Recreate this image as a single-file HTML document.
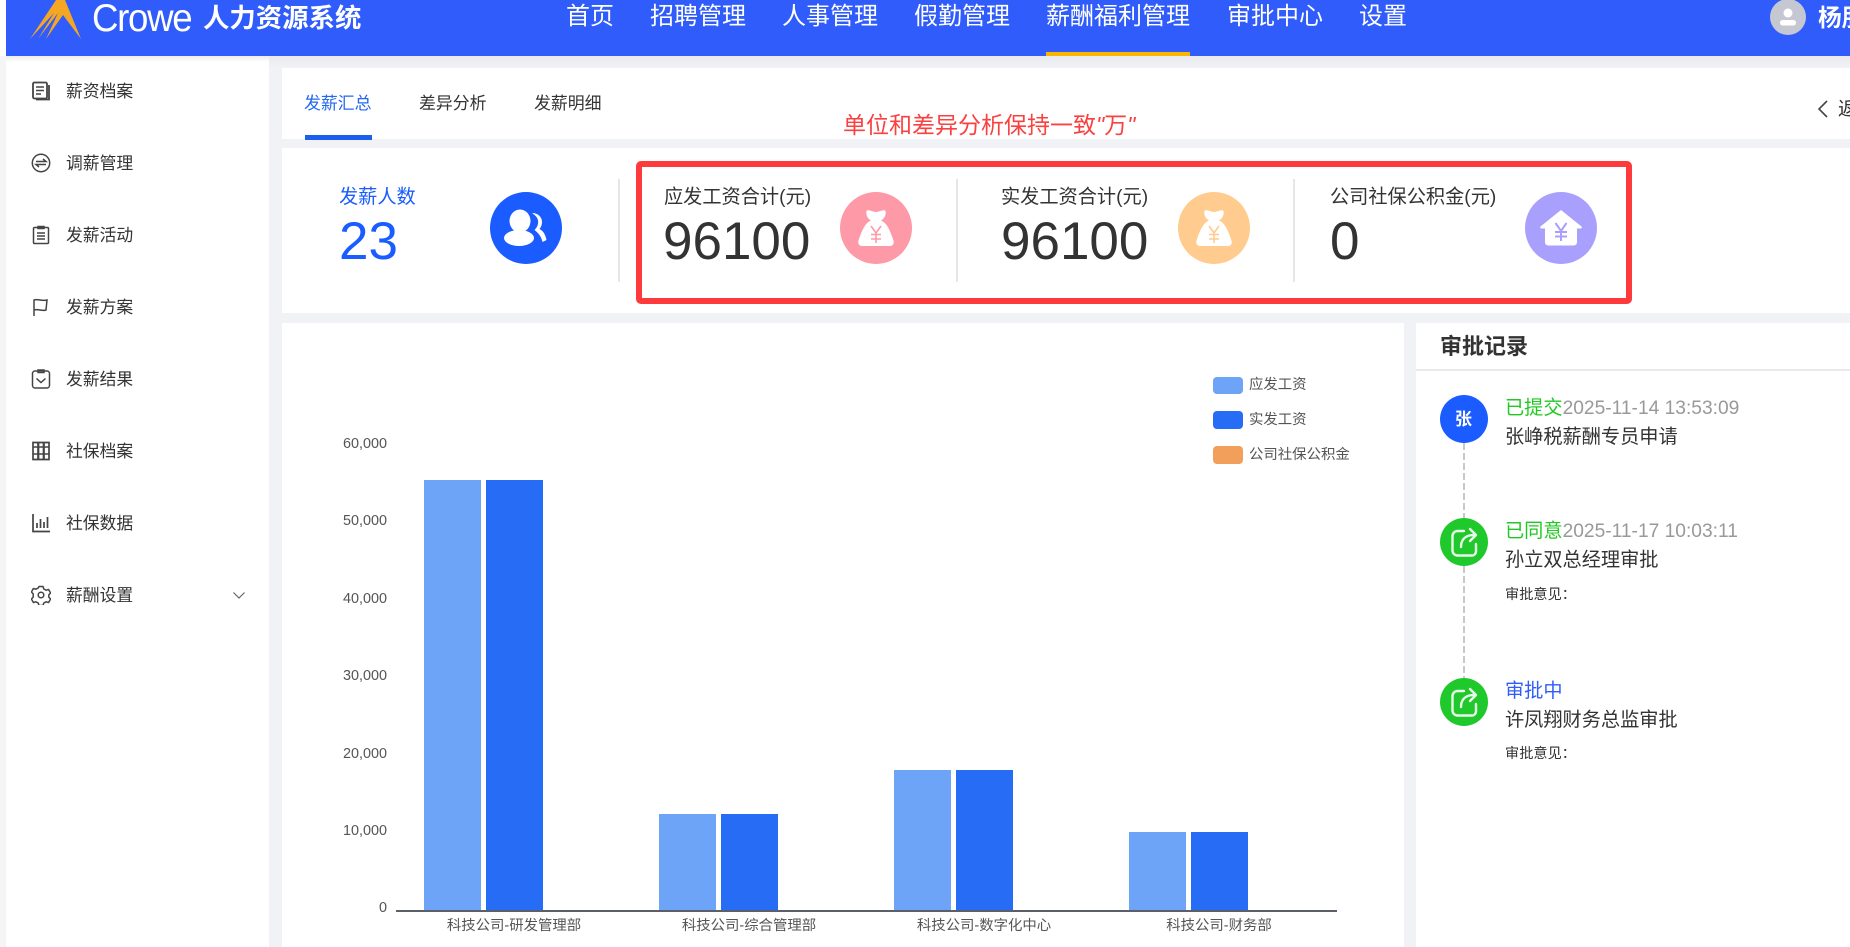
<!DOCTYPE html>
<html lang="zh">
<head>
<meta charset="utf-8">
<title>人力资源系统</title>
<style>
html,body{margin:0;padding:0;width:1850px;height:947px;overflow:hidden;background:#f1f2f5;}
body{position:relative;font-family:"Liberation Sans","Noto Sans CJK SC",sans-serif;color:#333;}
.b{position:absolute;}
.t{position:absolute;white-space:nowrap;}
.nav{font-size:24px;color:#fff;top:2px;line-height:30px;}
.side{font-size:16.8px;color:#333;left:66px;line-height:24px;}
.tab{font-size:16.9px;top:92px;line-height:24px;color:#333;}
.lab{font-size:19.2px;top:185px;line-height:26px;color:#333;}
.num{font-size:53px;top:214px;line-height:56px;color:#333;}
.circ{position:absolute;width:72px;height:72px;top:192px;border-radius:50%;}
.dv{position:absolute;width:2px;top:179px;height:103px;background:#e6e6e6;}
.ic{position:absolute;left:31px;width:20px;height:20px;fill:none;stroke:#444;stroke-width:1.5;}
.ax{font-size:14.4px;color:#555;line-height:18px;}
.yl{right:1463px;}
.xl{top:917px;transform:translateX(-50%);}
.bar{position:absolute;}
.tl{font-size:19.2px;line-height:24px;left:1505px;color:#333;}
.cm{font-size:14.2px;line-height:20px;left:1505px;color:#333;}
.dot{position:absolute;left:1440px;width:48px;height:48px;border-radius:50%;background:#1fc92b;}
.dash{position:absolute;left:1463px;width:2px;background:repeating-linear-gradient(to bottom,#c8c8c8 0 7px,transparent 7px 10px);}
</style>
</head>
<body>
<!-- left strip, sidebar -->
<div class="b" style="left:0;top:0;width:6px;height:56px;background:#fff"></div>
<div class="b" style="left:0;top:56px;width:6px;height:891px;background:#f5f5f5"></div>
<div class="b" style="left:6px;top:56px;width:263px;height:891px;background:#fff"></div>
<div class="b" style="left:269px;top:56px;width:1581px;height:12px;background:linear-gradient(#e9eaed,#f1f2f5)"></div>
<div class="b" style="left:6px;top:56px;width:263px;height:6px;background:linear-gradient(#ececee,#fff)"></div>

<!-- header -->
<div class="b" style="left:6px;top:0;width:1844px;height:56px;background:#2f5cfa"></div>
<svg class="b" style="left:26px;top:0" width="60" height="42" viewBox="26 0 60 42">
  <path fill="#f5a623" d="M56 0H65L81 39L63 15L46 39L58 13L38 39L54 13L30 39Z"/>
</svg>
<div class="t" style="left:92px;top:-3px;font-size:39px;line-height:44px;color:#fff;letter-spacing:-1.4px;transform-origin:left;transform:scaleX(.94)">Crowe</div>
<div class="t" style="left:203px;top:2px;font-size:26.4px;line-height:32px;color:#fff;font-weight:700">人力资源系统</div>
<div class="t nav" style="left:566px">首页</div>
<div class="t nav" style="left:650px">招聘管理</div>
<div class="t nav" style="left:782px">人事管理</div>
<div class="t nav" style="left:914px">假勤管理</div>
<div class="t nav" style="left:1046px">薪酬福利管理</div>
<div class="t nav" style="left:1227px">审批中心</div>
<div class="t nav" style="left:1359px">设置</div>
<div class="b" style="left:1046px;top:52px;width:144px;height:4px;background:#f9b500"></div>
<svg class="b" style="left:1770px;top:0" width="36" height="36" viewBox="0 0 36 36">
  <circle cx="18" cy="17" r="18" fill="#c5c8d2"/>
  <circle cx="18" cy="13" r="4.5" fill="#fff"/>
  <rect x="10" y="20" width="16" height="5.5" rx="2.7" fill="#fff"/>
</svg>
<div class="t" style="left:1818px;top:4px;font-size:23.6px;line-height:30px;color:#fff;font-weight:700">杨朋</div>

<!-- sidebar -->
<svg class="ic" style="top:81px" viewBox="0 0 20 20"><rect x="2" y="1.5" width="14" height="16" rx="1.5" stroke-width="1.8"/><path d="M5 6h8M5 9.5h8M5 13h5"/><path d="M18 4v14.5H5" stroke-width="1.8"/></svg>
<div class="t side" style="top:80px">薪资档案</div>
<svg class="ic" style="top:153px" viewBox="0 0 20 20"><circle cx="10" cy="10" r="8.7"/><path d="M5 8.5h10L12 6M15 11.5H5L8 14"/></svg>
<div class="t side" style="top:152px">调薪管理</div>
<svg class="ic" style="top:225px" viewBox="0 0 20 20"><rect x="2.5" y="2.5" width="15" height="16" rx="1"/><path d="M7 1.500h6v2H7zM6 8h8M6 11h8M6 14h8"/></svg>
<div class="t side" style="top:224px">发薪活动</div>
<svg class="ic" style="top:297px" viewBox="0 0 20 20"><path d="M3 19V3c4-1.500 8 1.500 13 0l-1 10c-4 1.500-8-1.500-12 0"/></svg>
<div class="t side" style="top:296px">发薪方案</div>
<svg class="ic" style="top:369px" viewBox="0 0 20 20"><rect x="1.500" y="2" width="17" height="17" rx="2.500"/><path d="M7 1h6v2.500H7zM5.500 9.500l4.500 4 4.500-4"/></svg>
<div class="t side" style="top:368px">发薪结果</div>
<svg class="ic" style="top:441px" viewBox="0 0 20 20"><path d="M2 1.500h5v17H2zM7.500 1.500h5v17h-5zM13 1.500h5v17h-5z" stroke-width="1.700"/><path d="M2 6h16M2 13h16" stroke-width="1.500"/></svg>
<div class="t side" style="top:440px">社保档案</div>
<svg class="ic" style="top:513px" viewBox="0 0 20 20"><path d="M2 1v17.500h17" stroke-width="1.700"/><path d="M6 15V10M9.500 15V6M13 15V9M16.500 15V4" stroke-width="1.700"/></svg>
<div class="t side" style="top:512px">社保数据</div>
<svg class="ic" style="top:585px" viewBox="0 0 20 20"><path stroke-linejoin="round" d="M8 1.500h4l.8 2.500 2.300 1.200 2.500-.7 2 3.500-1.800 1.900v2.200l1.800 1.900-2 3.500-2.500-.7-2.300 1.200-.8 2.500H8l-.8-2.500-2.300-1.200-2.500.7-2-3.500 1.800-1.900V8.900L.4 7 2.400 3.500l2.500.7 2.300-1.200z"/><circle cx="10" cy="10" r="2.800"/></svg>
<div class="t side" style="top:584px">薪酬设置</div>
<svg class="b" style="left:232px;top:591px" width="14" height="9" viewBox="0 0 14 9"><path d="M1.500 1.500L7 7l5.500-5.500" fill="none" stroke="#666" stroke-width="1.200"/></svg>

<!-- tabs panel -->
<div class="b" style="left:282px;top:68px;width:1568px;height:71px;background:#fff"></div>
<div class="t tab" style="left:304px;color:#2468f2">发薪汇总</div>
<div class="t tab" style="left:419px">差异分析</div>
<div class="t tab" style="left:534px">发薪明细</div>
<div class="b" style="left:305px;top:135px;width:67px;height:5px;background:#1c5fee"></div>
<svg class="b" style="left:1816px;top:99px" width="14" height="20" viewBox="0 0 14 20"><path d="M11 2L3 10l8 8" fill="none" stroke="#444" stroke-width="1.600"/></svg>
<div class="t" style="left:1838px;top:98px;font-size:19px;line-height:24px;color:#333">返回</div>
<div class="t" style="left:843px;top:111px;font-size:23px;line-height:28px;color:#fb4040">单位和差异分析保持一致<span style="font-style:italic">"</span>万<span style="font-style:italic">"</span></div>

<!-- stats panel -->
<div class="b" style="left:282px;top:148px;width:1568px;height:165px;background:#fff"></div>
<div class="t lab" style="left:339px;color:#1a5cff">发薪人数</div>
<div class="t num" style="left:339px;color:#1a5cff">23</div>
<div class="circ" style="left:490px;background:#1a5cff"></div>
<svg class="b" style="left:490px;top:192px" width="72" height="72" viewBox="0 0 72 72">
  <ellipse cx="30" cy="29" rx="10.500" ry="11.500" fill="#fff"/>
  <ellipse cx="29" cy="46" rx="15" ry="8" fill="#fff"/>
  <path fill="#fff" d="M42 21c6 0 10 4 10 9 0 3-1 5-2.500 7 4 2 6 6 7 11l-4 2c-1-5-4-9-8-12 3-3 4-6 3.500-9.500-.3-3-3-5.500-6-7.500z"/>
</svg>
<div class="dv" style="left:618px"></div>

<div class="t lab" style="left:664px">应发工资合计(元)</div>
<div class="t num" style="left:663px">96100</div>
<div class="circ" style="left:840px;background:#fe9aa8"></div>
<svg class="b" style="left:840px;top:192px" width="72" height="72" viewBox="0 0 72 72">
  <path fill="#fff" d="M27 18.500c2-1 6 1.500 9 1.500s7-2.500 9-1.500c1.500 1 .5 6-1.500 8-.8 1-2 1.500-2.500 2 6 2.500 9 10 12.500 20 .8 3-.5 5.500-3.500 5.500H22c-3 0-4.300-2.500-3.500-5.500 3.500-10 6.500-17.500 12.500-20-.5-.5-1.700-1-2.500-2-2-2-3-7-1.500-8z"/>
  <path fill="none" stroke="#fe9aa8" stroke-width="1.600" d="M31 34l5 7 5-7M36 41v10M31 42.500h10M31 47h10"/>
</svg>
<div class="dv" style="left:956px"></div>

<div class="t lab" style="left:1001px">实发工资合计(元)</div>
<div class="t num" style="left:1001px">96100</div>
<div class="circ" style="left:1178px;background:#ffcb8e"></div>
<svg class="b" style="left:1178px;top:192px" width="72" height="72" viewBox="0 0 72 72">
  <path fill="#fff" d="M27 18.500c2-1 6 1.500 9 1.500s7-2.500 9-1.500c1.500 1 .5 6-1.500 8-.8 1-2 1.500-2.500 2 6 2.500 9 10 12.500 20 .8 3-.5 5.500-3.500 5.500H22c-3 0-4.300-2.500-3.500-5.500 3.500-10 6.500-17.500 12.500-20-.5-.5-1.700-1-2.500-2-2-2-3-7-1.500-8z"/>
  <path fill="none" stroke="#ffcb8e" stroke-width="1.600" d="M31 34l5 7 5-7M36 41v10M31 42.500h10M31 47h10"/>
</svg>
<div class="dv" style="left:1293px"></div>

<div class="t lab" style="left:1330px">公司社保公积金(元)</div>
<div class="t num" style="left:1330px">0</div>
<div class="circ" style="left:1525px;background:#a9a0fd"></div>
<svg class="b" style="left:1525px;top:192px" width="72" height="72" viewBox="0 0 72 72">
  <path fill="#fff" d="M36 18L56.500 34.500c.8.8.3 2-1 2H52V50c0 2-1.200 3.500-3.500 3.500h-25C21.200 53.500 20 52 20 50V36.500h-3.500c-1.300 0-1.800-1.200-1-2z"/>
  <path fill="none" stroke="#a9a0fd" stroke-width="2" d="M30.500 31l5.500 8 5.500-8M36 39v10M30 40h12M30 44.500h12"/>
</svg>

<!-- red box -->
<div class="b" style="left:636px;top:161px;width:984px;height:131px;border:6px solid #fe3a3d;border-radius:5px"></div>

<!-- chart panel -->
<div class="b" style="left:282px;top:323px;width:1122px;height:624px;background:#fff"></div>
<div class="t ax yl" style="top:435px">60,000</div>
<div class="t ax yl" style="top:512px">50,000</div>
<div class="t ax yl" style="top:590px">40,000</div>
<div class="t ax yl" style="top:667px">30,000</div>
<div class="t ax yl" style="top:745px">20,000</div>
<div class="t ax yl" style="top:822px">10,000</div>
<div class="t ax yl" style="top:899px">0</div>

<div class="bar" style="left:424px;top:480px;width:57px;height:430px;background:#6ea4f8"></div>
<div class="bar" style="left:486px;top:480px;width:57px;height:430px;background:#276cf5"></div>
<div class="bar" style="left:659px;top:814px;width:57px;height:96px;background:#6ea4f8"></div>
<div class="bar" style="left:721px;top:814px;width:57px;height:96px;background:#276cf5"></div>
<div class="bar" style="left:894px;top:770px;width:57px;height:140px;background:#6ea4f8"></div>
<div class="bar" style="left:956px;top:770px;width:57px;height:140px;background:#276cf5"></div>
<div class="bar" style="left:1129px;top:832px;width:57px;height:78px;background:#6ea4f8"></div>
<div class="bar" style="left:1191px;top:832px;width:57px;height:78px;background:#276cf5"></div>
<div class="b" style="left:396px;top:910px;width:941px;height:2px;background:#5a5f6a"></div>

<div class="t ax xl" style="left:514px">科技公司-研发管理部</div>
<div class="t ax xl" style="left:749px">科技公司-综合管理部</div>
<div class="t ax xl" style="left:984px">科技公司-数字化中心</div>
<div class="t ax xl" style="left:1219px">科技公司-财务部</div>

<div class="b" style="left:1213px;top:377px;width:30px;height:17px;border-radius:4px;background:#6ea4f8"></div>
<div class="t ax" style="left:1249px;top:376px">应发工资</div>
<div class="b" style="left:1213px;top:411px;width:30px;height:18px;border-radius:4px;background:#276cf5"></div>
<div class="t ax" style="left:1249px;top:411px">实发工资</div>
<div class="b" style="left:1213px;top:446px;width:30px;height:18px;border-radius:4px;background:#f29f5c"></div>
<div class="t ax" style="left:1249px;top:446px">公司社保公积金</div>

<!-- approval panel -->
<div class="b" style="left:1416px;top:323px;width:434px;height:624px;background:#fff"></div>
<div class="t" style="left:1440px;top:333px;font-size:22px;line-height:28px;font-weight:700;color:#333">审批记录</div>
<div class="b" style="left:1416px;top:369px;width:434px;height:2px;background:#e9e9eb"></div>

<div class="dash" style="top:443px;height:75px"></div>
<div class="dash" style="top:566px;height:112px"></div>

<div class="dot" style="top:395px;background:#1a5cff"></div>
<div class="t" style="left:1455px;top:408px;font-size:17px;line-height:24px;color:#fff;font-weight:700">张</div>

<div class="dot" style="top:518px"></div>
<svg class="b" style="left:1440px;top:518px" width="48" height="48" viewBox="0 0 48 48"><path d="M24 13h-6.500a5 5 0 0 0-5 5v14.500a5 5 0 0 0 5 5H32a4 4 0 0 0 4-4V26" fill="none" stroke="#e8f9ea" stroke-width="2.400" stroke-linecap="round"/><path d="M21 29c0-8 5-12 13-12M30 11l6 6-6 6" fill="none" stroke="#e8f9ea" stroke-width="2.400" stroke-linecap="round" stroke-linejoin="round"/></svg>
<div class="dot" style="top:678px"></div>
<svg class="b" style="left:1440px;top:678px" width="48" height="48" viewBox="0 0 48 48"><path d="M24 13h-6.500a5 5 0 0 0-5 5v14.500a5 5 0 0 0 5 5H32a4 4 0 0 0 4-4V26" fill="none" stroke="#e8f9ea" stroke-width="2.400" stroke-linecap="round"/><path d="M21 29c0-8 5-12 13-12M30 11l6 6-6 6" fill="none" stroke="#e8f9ea" stroke-width="2.400" stroke-linecap="round" stroke-linejoin="round"/></svg>

<div class="t tl" style="top:397px"><span style="color:#22c822">已提交</span><span style="color:#999">2025-11-14 13:53:09</span></div>
<div class="t tl" style="top:426px">张峥税薪酬专员申请</div>
<div class="t tl" style="top:520px"><span style="color:#22c822">已同意</span><span style="color:#999">2025-11-17 10:03:11</span></div>
<div class="t tl" style="top:549px">孙立双总经理审批</div>
<div class="t cm" style="top:585px">审批意见：</div>
<div class="t tl" style="top:680px;color:#2f5cfa">审批中</div>
<div class="t tl" style="top:709px">许凤翔财务总监审批</div>
<div class="t cm" style="top:744px">审批意见：</div>
</body>
</html>
